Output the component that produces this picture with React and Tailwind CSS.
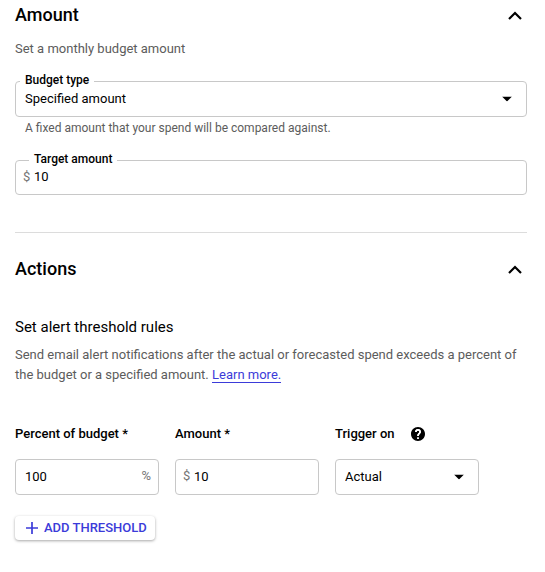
import React, { useState } from "react";

const box =
  "w-full rounded border border-[#c8c8c8] bg-white text-[13px] leading-5 text-black outline-none focus:border-[#3b3bd9]";

const floatingLabel = "absolute -top-[9px] z-10 bg-white px-[5px] text-xs leading-4 font-medium text-black";

function SectionHeader({ title }) {
  return (
    <header className="flex items-center justify-between">
      <h2 className="text-lg leading-6 font-medium text-black">{title}</h2>
      <button type="button" aria-label={`Collapse ${title}`} className="flex size-6 items-center justify-center">
        <svg viewBox="0 0 24 24" className="size-6" fill="none" stroke="black" strokeWidth="2.2">
          <path d="M6 16l6-6 6 6" />
        </svg>
      </button>
    </header>
  );
}

function Caret() {
  return (
    <svg viewBox="0 0 10 5" className="pointer-events-none absolute top-1/2 right-[15px] h-[5px] w-[10px] -translate-y-1/2">
      <path d="M0 0h10L5 5z" fill="black" />
    </svg>
  );
}

function Prefix() {
  return (
    <span className="pointer-events-none absolute top-0 left-2 flex h-[34px] items-center text-[13px] leading-5 text-[#757575]">
      $
    </span>
  );
}

export default function App() {
  const [target, setTarget] = useState("10");
  const [percent, setPercent] = useState("100");
  const [amount, setAmount] = useState("10");

  return (
    <main className="bg-white pt-[3px] pr-[18px] pb-8 pl-[15px] font-[Roboto,sans-serif] text-[13px] leading-5 text-[#5c5c5c]">
      <section>
        <SectionHeader title="Amount" />
        <p className="mt-3">Set a monthly budget amount</p>

        <div className="relative mt-[22px]">
          <label htmlFor="budget-type" className={`${floatingLabel} left-[5px]`}>
            Budget type
          </label>
          <select id="budget-type" className={`${box} h-9 appearance-none px-[9px]`}>
            <option>Specified amount</option>
            <option>Last month's spend</option>
          </select>
          <Caret />
        </div>
        <p className="mt-px pl-[10px] text-xs leading-5">A fixed amount that your spend will be compared against.</p>

        <div className="relative mt-[22px]">
          <label htmlFor="target-amount" className={`${floatingLabel} left-[14px]`}>
            Target amount
          </label>
          <Prefix />
          <input
            id="target-amount"
            value={target}
            onChange={(e) => setTarget(e.target.value)}
            className={`${box} block h-[35px] pr-2 pb-[2px] pl-[18px]`}
          />
        </div>
      </section>

      <hr className="mt-[37px] border-[#dcdcdc]" />

      <section className="mt-6">
        <SectionHeader title="Actions" />
        <h3 className="mt-[34px] text-[15px] leading-6 text-black">Set alert threshold rules</h3>
        <p className="mt-[6px]">
          Send email alert notifications after the actual or forecasted spend exceeds a percent of the budget or a
          specified amount.{" "}
          <a href="#learn" className="border-b border-[#3b3bd9] text-[#3b3bd9]">
            Learn more.
          </a>
        </p>

        <div className="mt-[39px] flex gap-4">
          <div className="w-36">
            <label htmlFor="percent" className="block font-medium text-black">
              Percent of budget *
            </label>
            <div className="relative mt-[15px]">
              <input
                id="percent"
                value={percent}
                onChange={(e) => setPercent(e.target.value)}
                className={`${box} block h-9 pr-7 pb-[2px] pl-[9px]`}
              />
              <span className="pointer-events-none absolute top-0 right-2 flex h-[34px] items-center text-[#757575]">
                %
              </span>
            </div>
          </div>

          <div className="w-36">
            <label htmlFor="amount" className="block font-medium text-black">
              Amount *
            </label>
            <div className="relative mt-[15px]">
              <Prefix />
              <input
                id="amount"
                value={amount}
                onChange={(e) => setAmount(e.target.value)}
                className={`${box} block h-9 pr-2 pb-[2px] pl-[18px]`}
              />
            </div>
          </div>

          <div className="w-36">
            <div className="flex items-center gap-4">
              <label htmlFor="trigger" className="font-medium text-black">
                Trigger on
              </label>
              <button type="button" aria-label="Help" className="flex">
                <svg viewBox="2 2 20 20" className="size-[14px]" fill="black">
                  <path
                    fillRule="evenodd"
                    d="M12 2C6.48 2 2 6.48 2 12s4.48 10 10 10 10-4.48 10-10S17.52 2 12 2zm1 17h-2v-2h2v2zm2.07-7.75l-.9.92C13.45 12.9 13 13.5 13 15h-2v-.5c0-1.1.45-2.1 1.17-2.83l1.24-1.26c.37-.36.59-.86.59-1.41 0-1.1-.9-2-2-2s-2 .9-2 2H8c0-2.21 1.79-4 4-4s4 1.79 4 4c0 .88-.36 1.68-.93 2.25z"
                  />
                  <path
                    d="M9 9c0-1.660 1.340-3 3-3s3 1.340 3 3c0 .6-.3 1.100-.7 1.550l-1.100 1.150C12.400 12.500 12 13.200 12 15M11 18h2"
                    fill="none"
                    stroke="white"
                    strokeWidth="2.4"
                  />
                </svg>
              </button>
            </div>
            <div className="relative mt-[15px]">
              <select id="trigger" className={`${box} block h-9 appearance-none px-[9px]`}>
                <option>Actual</option>
                <option>Forecasted</option>
              </select>
              <Caret />
            </div>
          </div>
        </div>

        <button
          type="button"
          className="mt-[21px] flex h-6 items-center gap-[6px] rounded bg-white pr-2 pl-[11px] text-[13px] font-medium text-[#3b3bd9] shadow-[0_1px_3px_rgba(0,0,0,0.35)]"
        >
          <svg viewBox="0 0 12 12" className="size-3" fill="none" stroke="currentColor" strokeWidth="1.7">
            <path d="M6 0v12M0 6h12" />
          </svg>
          ADD THRESHOLD
        </button>
      </section>
    </main>
  );
}
